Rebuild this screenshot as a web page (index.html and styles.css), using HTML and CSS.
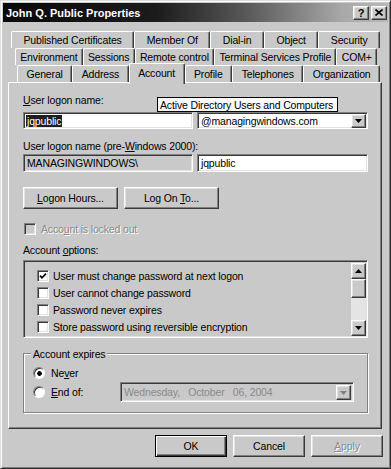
FILE: index.html
```html
<!DOCTYPE html>
<html>
<head>
    <meta charset="UTF-8">
    <title>John Q. Public Properties</title>
    <link rel="stylesheet" href="styles.css">
</head>
<body>
<div class="window">
    <div class="titlebar">
        <span class="title">John Q. Public Properties</span>
        <div class="title-btns">
            <span class="tbtn">?</span>
            <span class="tbtn">
                <svg width="8" height="7" viewBox="0 0 8 7"><path d="M0.5 0.5 L7.5 6.5 M7.5 0.5 L0.5 6.5" stroke="#000" stroke-width="1.6"/></svg>
            </span>
        </div>
    </div>

    <div class="tabs">
        <div class="tab-row row1">
            <div class="tab">Published Certificates</div>
            <div class="tab">Member Of</div>
            <div class="tab">Dial-in</div>
            <div class="tab">Object</div>
            <div class="tab">Security</div>
        </div>
        <div class="tab-row row2">
            <div class="tab">Environment</div>
            <div class="tab">Sessions</div>
            <div class="tab">Remote control</div>
            <div class="tab">Terminal Services Profile</div>
            <div class="tab">COM+</div>
        </div>
        <div class="tab-row row3">
            <div class="tab">General</div>
            <div class="tab">Address</div>
            <div class="tab active">Account</div>
            <div class="tab">Profile</div>
            <div class="tab">Telephones</div>
            <div class="tab">Organization</div>
        </div>
    </div>

    <div class="panel">
        <div class="label first"><u>U</u>ser logon name:</div>
        <div class="field-pair">
            <div class="field"><span class="selected">jqpublic</span></div>
            <div class="field combo">
                <span class="combo-text">@managingwindows.com</span>
                <span class="drop-btn">
                    <svg width="7" height="4" viewBox="0 0 7 4"><polygon points="0,0 7,0 3.5,4" fill="#000"/></svg>
                </span>
            </div>
        </div>

        <div class="label second">User logon name (pre-<u>W</u>indows 2000):</div>
        <div class="field-pair tight">
            <div class="field readonly">MANAGINGWINDOWS\</div>
            <div class="field">jqpublic</div>
        </div>

        <div class="btn-row">
            <div class="button"><span><u>L</u>ogon Hours...</span></div>
            <div class="button"><span>Log On <u>T</u>o...</span></div>
        </div>

        <div class="check-row">
            <span class="checkbox off"></span>
            <span class="grayed">Acco<u>u</u>nt is locked out</span>
        </div>

        <div class="label options">Account <u>o</u>ptions:</div>
        <div class="listbox">
            <div class="list-items">
                <div class="list-item">
                    <span class="checkbox">
                        <svg width="8" height="8" viewBox="0 0 8 8"><path d="M1 3.6 L3 5.8 L7 1.6" fill="none" stroke="#000" stroke-width="1.7"/></svg>
                    </span>
                    <span>User must change password at next logon</span>
                </div>
                <div class="list-item"><span class="checkbox"></span><span>User cannot change password</span></div>
                <div class="list-item"><span class="checkbox"></span><span>Password never expires</span></div>
                <div class="list-item"><span class="checkbox"></span><span>Store password using reversible encryption</span></div>
            </div>
            <div class="scrollbar">
                <span class="sb-btn">
                    <svg width="7" height="4" viewBox="0 0 7 4"><polygon points="0,4 7,4 3.5,0" fill="#000"/></svg>
                </span>
                <span class="sb-thumb"></span>
                <span class="sb-track"></span>
                <span class="sb-btn">
                    <svg width="7" height="4" viewBox="0 0 7 4"><polygon points="0,0 7,0 3.5,4" fill="#000"/></svg>
                </span>
            </div>
        </div>

        <div class="group">
            <span class="legend">Account expires</span>
            <div class="radio-row never"><span class="radio on"></span><span>Ne<u>v</u>er</span></div>
            <div class="radio-row endof">
                <span class="radio"></span><span><u>E</u>nd of:</span>
                <div class="datepicker">
                    <span class="date-text">Wednesday,&nbsp;&nbsp; October &nbsp; 06, 2004</span>
                    <span class="drop-btn">
                        <svg width="7" height="4" viewBox="0 0 7 4"><polygon points="0,0 7,0 3.5,4" fill="#808080"/></svg>
                    </span>
                </div>
            </div>
        </div>

        <div class="tooltip">Active Directory Users and Computers</div>
    </div>

    <div class="dialog-btns">
        <div class="button default">OK</div>
        <div class="button">Cancel</div>
        <div class="button grayed"><span><u>A</u>pply</span></div>
    </div>
</div>
</body>
</html>
```

FILE: styles.css
```css
:root {
    --face: #c9c9c9;
    --light: #ffffff;
    --hilite: #e2e2e2;
    --shadow: #808080;
    --dark: #3a3a3a;
    --track: #e4e4e4;
}

* {
    box-sizing: border-box;
}

body {
    margin: 0;
    background-color: var(--face);
    font-family: "Liberation Sans", Arial, sans-serif;
    font-size: 10.5px;
    letter-spacing: -0.15px;
    color: #000;
}

u {
    text-decoration: underline;
    text-underline-offset: 1px;
}

/* 3d edges */
.tbtn,
.button,
.drop-btn,
.sb-btn,
.sb-thumb {
    border: 1px solid;
    border-color: var(--light) var(--dark) var(--dark) var(--light);
    box-shadow: inset -1px -1px var(--shadow), inset 1px 1px var(--hilite);
    background-color: var(--face);
}

.field,
.listbox,
.datepicker,
.checkbox {
    border: 1px solid;
    border-color: var(--shadow) var(--light) var(--light) var(--shadow);
    box-shadow: inset 1px 1px var(--dark), inset -1px -1px var(--hilite);
    background-color: #fff;
}

.window {
    width: 391px;
    height: 469px;
    border: 1px solid;
    border-color: #dcdcdc #2a2a2a #2a2a2a #dcdcdc;
    box-shadow: inset 1px 1px #fff, inset -1px -1px var(--shadow);
    padding: 2px;
    display: flex;
    flex-direction: column;
}

.titlebar {
    height: 19px;
    background: linear-gradient(to right, #080808, #1c1c1c 40%, #5e5e5e 65%, #a8a8a8 88%, #b8b8b8);
    display: flex;
    align-items: center;
    justify-content: space-between;
    padding: 0 1px 0 3px;
}

.title {
    color: #fff;
    font-weight: bold;
    font-size: 11px;
    letter-spacing: 0;
}

.title-btns {
    display: flex;
    gap: 2px;
}

.tbtn {
    width: 16px;
    height: 14px;
    display: flex;
    align-items: center;
    justify-content: center;
    font-weight: bold;
    font-size: 11px;
    letter-spacing: 0;
}

/* tabs */
.tabs {
    padding-top: 9px;
    display: flex;
    flex-direction: column;
}

.tab-row {
    display: flex;
    height: 17px;
}

.row1 {
    margin: 0 8px 0 8px;
}

.row2 {
    margin: 0 11px 0 12px;
}

.row3 {
    margin: 0 8px 0 14px;
}

.tab {
    flex: 1 1 auto;
    display: flex;
    align-items: center;
    justify-content: center;
    white-space: nowrap;
    padding: 0 4px;
    border-top: 1px solid var(--light);
    border-left: 1px solid var(--light);
    border-right: 1px solid var(--dark);
    box-shadow: inset -1px 0 var(--shadow);
    border-radius: 2px 2px 0 0;
    background-color: var(--face);
}

.tab.active {
    position: relative;
    z-index: 2;
    height: 21px;
    margin-top: -2px;
    padding-bottom: 3px;
    align-self: flex-start;
}

/* panel */
.panel {
    position: relative;
    margin: 0 6px 0 5px;
    border: 1px solid;
    border-color: var(--light) var(--dark) var(--dark) var(--light);
    box-shadow: inset -1px -1px var(--shadow);
    padding: 0 13px 15px 14px;
}

.label {
    line-height: 13px;
}

.label.first {
    margin-top: 11px;
}

.label.second {
    margin-top: 11px;
}

.label.options {
    margin-top: 9px;
}

.field-pair {
    display: grid;
    grid-template-columns: 170px 1fr;
    gap: 4px;
    margin-top: 5px;
    height: 17px;
}

.field-pair.tight {
    margin-top: 1px;
    height: 18px;
}

.field {
    display: flex;
    align-items: center;
    padding: 0 3px;
    white-space: nowrap;
}

.field.readonly {
    background-color: var(--face);
}

.selected {
    background-color: #1e1e1e;
    color: #fff;
    padding: 0 1px;
    margin-left: -1px;
    line-height: 12px;
}

.combo {
    padding-right: 2px;
    justify-content: space-between;
}

.drop-btn {
    width: 15px;
    height: 100%;
    display: flex;
    align-items: center;
    justify-content: center;
    padding-top: 1px;
}

.combo .drop-btn {
    height: 14px;
    margin-right: -1px;
}

.btn-row {
    display: flex;
    gap: 6px;
    margin-top: 15px;
}

.button {
    width: 95px;
    height: 22px;
    display: flex;
    align-items: center;
    justify-content: center;
    white-space: pre;
}

.grayed {
    color: #8a8a8a;
    text-shadow: 1px 1px #fff;
}

.check-row {
    display: flex;
    align-items: center;
    gap: 5px;
    margin-top: 13px;
    height: 13px;
    padding-left: 1px;
}

.checkbox {
    width: 12px;
    height: 12px;
    display: flex;
    align-items: center;
    justify-content: center;
    flex: none;
}

.checkbox.off {
    background-color: var(--face);
}

/* list */
.listbox {
    margin-top: 3px;
    height: 78px;
    display: flex;
    padding: 2px 1px 1px 2px;
    background-color: var(--face);
}

.list-items {
    flex: 1;
    padding: 4px 0 0 11px;
}

.list-item {
    height: 17px;
    display: flex;
    align-items: center;
    gap: 4px;
    white-space: nowrap;
}

.scrollbar {
    width: 15px;
    display: flex;
    flex-direction: column;
}

.sb-btn {
    height: 16px;
    display: flex;
    align-items: center;
    justify-content: center;
}

.sb-thumb {
    height: 19px;
}

.sb-track {
    flex: 1;
    background-color: var(--track);
}

/* group box */
.group {
    margin-top: 15px;
    border: 1px solid var(--shadow);
    box-shadow: inset 1px 1px #fff, 1px 1px #fff;
    padding: 0 13px 10px 9px;
}

.legend {
    display: block;
    width: fit-content;
    margin: -6px 0 0 -2px;
    padding: 0 2px;
    line-height: 13px;
    background-color: var(--face);
}

.radio-row {
    display: flex;
    align-items: center;
    gap: 6px;
}

.radio-row.never {
    margin-top: 4px;
    height: 15px;
}

.radio-row.endof {
    margin-top: 2px;
    height: 20px;
}

.radio {
    width: 12px;
    height: 12px;
    border-radius: 50%;
    border: 1px solid;
    border-color: var(--shadow) var(--light) var(--light) var(--shadow);
    box-shadow: inset 1px 1px var(--dark);
    background-color: #fff;
    flex: none;
}

.radio.on {
    background: radial-gradient(circle at 55% 55%, #000 0 2px, #fff 2.6px);
}

.datepicker {
    margin-left: auto;
    width: 234px;
    height: 20px;
    display: flex;
    align-items: center;
    justify-content: space-between;
    padding: 2px 2px 2px 3px;
    background-color: var(--face);
}

.date-text {
    color: #8a8a8a;
}

.datepicker .drop-btn {
    height: 15px;
}

/* overlay */
.tooltip {
    position: absolute;
    left: 148px;
    top: 14px;
    width: 181px;
    height: 15px;
    border: 1px solid #000;
    background-color: #fafafa;
    display: flex;
    align-items: center;
    padding-left: 2px;
    white-space: nowrap;
}

/* bottom buttons */
.dialog-btns {
    display: flex;
    justify-content: flex-end;
    gap: 6px;
    margin-top: 6px;
    padding-right: 5px;
}

.dialog-btns .button {
    width: 72px;
}

.button.default {
    border-color: #000;
    box-shadow: inset 1px 1px #fff, inset -1px -1px var(--dark), inset -2px -2px var(--shadow);
}
```
